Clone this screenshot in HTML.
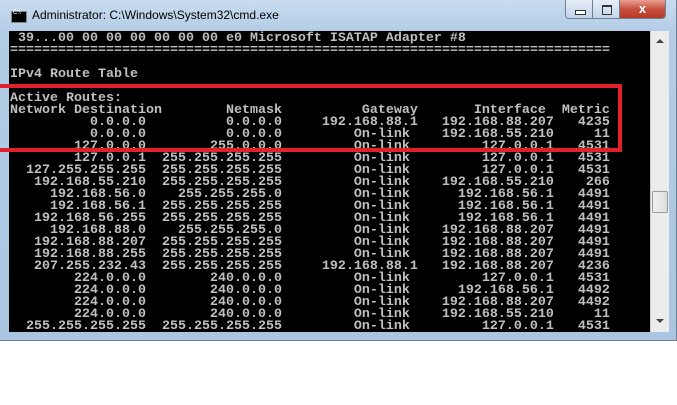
<!DOCTYPE html>
<html><head><style>
body{margin:0;width:677px;height:405px;background:#fff;position:relative;overflow:hidden;font-family:"Liberation Sans",sans-serif}
.win{position:absolute;left:0;top:0;width:677px;height:341px;background:linear-gradient(180deg,#c9dcef 0,#b4cde6 30px,#a9c5e2 100%);border-right:1px solid #6b7f95;border-bottom:1px solid #6b7f95;box-sizing:border-box}
.title{position:absolute;left:32px;top:8px;font-size:12px;color:#000}
.ico{position:absolute;left:11px;top:11px;width:14px;height:10px;background:#000;border:1px solid #888}
.ico:after{content:"C:\\";position:absolute;left:1px;top:-2px;font-size:6px;color:#fff}
.btn{position:absolute;top:0;height:19px;border:1px solid #6d7f96;border-top:none;box-sizing:border-box}
.con{position:absolute;left:9px;top:31px;width:641px;height:301px;background:#000;overflow:hidden}
pre{margin:0;position:absolute;left:1px;top:2px;font-family:"Liberation Mono",monospace;font-size:13.33px;line-height:12px;color:#c0c0c0;font-weight:bold}
.sb{position:absolute;left:650px;top:31px;width:18px;height:301px;background:#ececec;border-left:1px solid #ccc}
.red{position:absolute;left:-6px;top:84px;width:620px;height:60px;border:4px solid #e0202a}
</style></head><body>
<div class="win">
<div class="ico"></div>
<div class="title">Administrator: C:\Windows\System32\cmd.exe</div>
<div class="btn" style="left:565px;width:28px;background:linear-gradient(#e6eef7,#c3d5ea);border-bottom-left-radius:4px"><div style="position:absolute;left:9px;top:10px;width:9px;height:3px;border:1px solid #333;background:#fff"></div></div>
<div class="btn" style="left:592px;width:28px;background:linear-gradient(#e6eef7,#c3d5ea)"><div style="position:absolute;left:9px;top:5px;width:8px;height:7px;border:1px solid #333;border-top-width:2px"></div></div>
<div class="btn" style="left:619px;width:47px;background:linear-gradient(#e8a093,#c7503c 50%,#b63a25);border-bottom-right-radius:4px;color:#fff;font-weight:bold;text-align:center;font-size:13px;line-height:17px">x</div>
<div class="con"><pre> 39...00 00 00 00 00 00 00 e0 Microsoft ISATAP Adapter #8
===========================================================================

IPv4 Route Table

Active Routes:
Network Destination        Netmask          Gateway       Interface  Metric
          0.0.0.0          0.0.0.0     192.168.88.1   192.168.88.207   4235
          0.0.0.0          0.0.0.0         On-link    192.168.55.210     11
        127.0.0.0        255.0.0.0         On-link         127.0.0.1   4531
        127.0.0.1  255.255.255.255         On-link         127.0.0.1   4531
  127.255.255.255  255.255.255.255         On-link         127.0.0.1   4531
   192.168.55.210  255.255.255.255         On-link    192.168.55.210    266
     192.168.56.0    255.255.255.0         On-link      192.168.56.1   4491
     192.168.56.1  255.255.255.255         On-link      192.168.56.1   4491
   192.168.56.255  255.255.255.255         On-link      192.168.56.1   4491
     192.168.88.0    255.255.255.0         On-link    192.168.88.207   4491
   192.168.88.207  255.255.255.255         On-link    192.168.88.207   4491
   192.168.88.255  255.255.255.255         On-link    192.168.88.207   4491
   207.255.232.43  255.255.255.255     192.168.88.1   192.168.88.207   4236
        224.0.0.0        240.0.0.0         On-link         127.0.0.1   4531
        224.0.0.0        240.0.0.0         On-link      192.168.56.1   4492
        224.0.0.0        240.0.0.0         On-link    192.168.88.207   4492
        224.0.0.0        240.0.0.0         On-link    192.168.55.210     11
  255.255.255.255  255.255.255.255         On-link         127.0.0.1   4531</pre></div>
<div class="sb">
<div style="position:absolute;left:5px;top:8px;width:0;height:0;border-left:4px solid transparent;border-right:4px solid transparent;border-bottom:4px solid #444"></div>
<div style="position:absolute;left:1px;top:160px;width:14px;height:20px;background:linear-gradient(90deg,#f2f2f2,#dcdcdc);border:1px solid #999;border-radius:2px"></div>
<div style="position:absolute;left:5px;top:288px;width:0;height:0;border-left:4px solid transparent;border-right:4px solid transparent;border-top:4px solid #444"></div>
</div>
</div>
<div class="red"></div>
</body></html>
